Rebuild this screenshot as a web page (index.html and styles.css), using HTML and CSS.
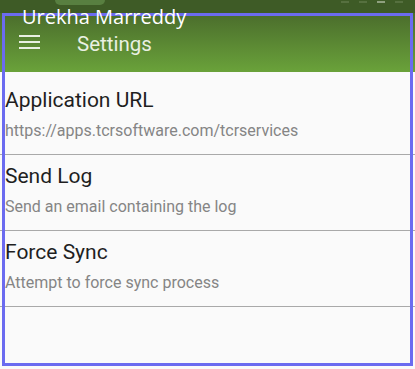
FILE: index.html
```html
<!DOCTYPE html>
<html lang="en">
  <head>
    <meta charset="UTF-8" />
    <meta name="viewport" content="width=device-width, initial-scale=1.0" />
    <title>Settings</title>
    <link rel="stylesheet" href="styles.css">
  </head>
  <body>
    <div class="screen">
      <div class="status-bar">
        <div class="pill"></div>
        <div class="status-icons">
          <span class="dot"></span>
          <span class="dot"></span>
          <span class="dot light"></span>
          <span class="dot"></span>
        </div>
      </div>
      <div class="toolbar">
        <div class="menu-icon">
          <span></span>
          <span></span>
          <span></span>
        </div>
        <div class="toolbar-title">Settings</div>
      </div>
      <div class="pref-list">
        <div class="pref">
          <div class="pref-title">Application URL</div>
          <div class="pref-summary">https://apps.tcrsoftware.com/tcrservices</div>
        </div>
        <div class="pref">
          <div class="pref-title">Send Log</div>
          <div class="pref-summary">Send an email containing the log</div>
        </div>
        <div class="pref">
          <div class="pref-title">Force Sync</div>
          <div class="pref-summary">Attempt to force sync process</div>
        </div>
      </div>

      <!-- annotation overlay -->
      <div class="highlight"></div>
      <div class="user-name">Urekha Marreddy</div>
    </div>
  </body>
</html>
```

FILE: styles.css
```css
html,
body {
  margin: 0;
  padding: 0;
}

body {
  width: 415px;
  height: 369px;
  overflow: hidden;
  background: #f1f1f1;
  font-family: Roboto, "Noto Sans", sans-serif;
}

.screen {
  position: relative;
  width: 415px;
  height: 369px;
  background: #fafafa;
}

.status-bar {
  height: 13px;
  background: #3e5b26;
  display: flex;
  align-items: flex-start;
  justify-content: space-between;
  padding: 0 12px 0 55px;
}

.pill {
  width: 50px;
  height: 5px;
  border-radius: 0 0 8px 8px;
  background: #587f40;
}

.status-icons {
  display: flex;
  gap: 10px;
  padding-top: 1px;
}

.dot {
  width: 8px;
  height: 2px;
  background: #56703f;
}

.dot.light {
  background: #8fa07f;
}

.toolbar {
  height: 59px;
  background: linear-gradient(to bottom, #4a6c2c, #6aa23a);
  display: flex;
  align-items: flex-start;
  box-sizing: border-box;
  padding: 21px 0 0 19px;
}

.menu-icon {
  display: flex;
  flex-direction: column;
  gap: 4px;
  width: 21px;
  padding-top: 1px;
}

.menu-icon span {
  display: block;
  height: 2px;
  background: #e9f0e2;
}

.toolbar-title {
  margin-left: 37px;
  font-size: 20.5px;
  line-height: 24px;
  margin-top: -2px;
  color: #e9f0e2;
}

.pref-list {
  padding-top: 7px;
}

.pref {
  padding: 9px 0 13px 5px;
  border-bottom: 1px solid #a9a9a9;
}

.pref-title {
  font-size: 21px;
  line-height: 24px;
  color: #1f1f1f;
  margin-bottom: 9px;
}

.pref-summary {
  font-size: 16px;
  line-height: 20px;
  color: #858585;
}

.highlight {
  position: absolute;
  left: 2px;
  top: 13px;
  width: 405px;
  height: 347px;
  border: 3px solid #6b6bf0;
}

.user-name {
  position: absolute;
  left: 22px;
  top: 3px;
  font-family: "Open Sans", sans-serif;
  font-size: 20px;
  line-height: 28px;
  color: #ffffff;
}
```
